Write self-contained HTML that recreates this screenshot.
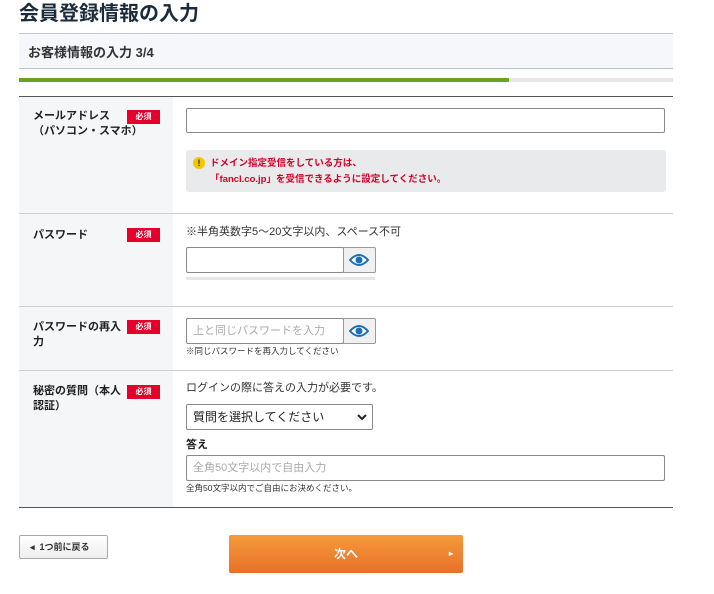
<!DOCTYPE html>
<html><head><meta charset="utf-8"><style>
*{box-sizing:border-box;margin:0;padding:0}
body{width:714px;height:594px;background:#fff;font-family:"Liberation Sans","Noto Sans CJK JP",sans-serif;color:#222;position:relative;overflow:hidden}
.a{position:absolute}
.lbl{position:absolute;left:33px;font-size:11px;font-weight:bold;line-height:15px;color:#222}
.badge{position:absolute;left:127px;width:33px;height:14px;background:#e4002b;color:#fff;font-size:8px;text-align:center;line-height:14px;font-weight:bold}
.inp{position:absolute;border:1px solid #8a8a8a;border-radius:2px;background:#fff;font-size:11px;color:#aaa;padding-left:6px}
.eye{position:absolute;width:33px;height:26px;border:1px solid #999;background:#f0f0f0;border-radius:0 2px 2px 0}
.hr{position:absolute;left:19px;width:654px;height:1px;background:#d0d0d0}
</style></head><body>
<div class="a" style="left:19px;top:1px;font-size:20px;font-weight:bold;color:#1c2b3b;line-height:26px">会員登録情報の入力</div>
<div class="a" style="left:19px;top:33px;width:654px;height:36px;background:#f5f7fa;border-top:1px solid #bac6d3;border-bottom:1px solid #bac6d3"></div>
<div class="a" style="left:28px;top:42px;font-size:13px;font-weight:bold;color:#333">お客様情報の入力 3/4</div>
<div class="a" style="left:19px;top:78px;width:654px;height:4px;background:#e6e6e6"></div>
<div class="a" style="left:19px;top:78px;width:490px;height:4px;background:#6aa321"></div>
<div class="a" style="left:19px;top:96px;width:654px;height:1px;background:#555"></div>
<div class="a" style="left:19px;top:97px;width:154px;height:410px;background:#f5f6f8"></div>
<div class="hr" style="top:213px"></div>
<div class="hr" style="top:306px"></div>
<div class="hr" style="top:370px"></div>
<div class="a" style="left:19px;top:507px;width:654px;height:1px;background:#555"></div>

<div class="lbl" style="top:109px">メールアドレス<br>（パソコン・スマホ）</div><div class="badge" style="top:110px">必須</div>
<div class="inp" style="left:186px;top:108px;width:479px;height:25px"></div>
<div class="a" style="left:186px;top:150px;width:480px;height:42px;background:#e9eaeb;border-radius:3px"></div>
<div class="a" style="left:193px;top:157px;width:12px;height:12px;border-radius:50%;background:#f5c400;font-size:9px;font-weight:bold;text-align:center;line-height:12px;color:#333">!</div>
<div class="a" style="left:210px;top:156px;font-size:9.5px;font-weight:bold;color:#d4002a;line-height:16px">ドメイン指定受信をしている方は、<br>「fancl.co.jp」を受信できるように設定してください。</div>

<div class="lbl" style="top:228px">パスワード</div><div class="badge" style="top:228px">必須</div>
<div class="a" style="left:186px;top:223px;font-size:11px;color:#333">※半角英数字5～20文字以内、スペース不可</div>
<div class="inp" style="left:186px;top:247px;width:158px;height:26px"></div>
<div class="eye" style="left:343px;top:247px"></div>
<svg class="a" style="left:349px;top:253px" width="20" height="14" viewBox="0 0 20 14"><path d="M1 7Q10 -3 19 7Q10 17 1 7Z" fill="#fff" stroke="#1a6fb8" stroke-width="2"/><circle cx="10" cy="7" r="3.5" fill="#1a6fb8"/></svg>
<div class="a" style="left:186px;top:277px;width:189px;height:3px;background:#e6e6e6"></div>

<div class="lbl" style="top:320px">パスワードの再入<br>力</div><div class="badge" style="top:320px">必須</div>
<div class="inp" style="left:186px;top:318px;width:158px;height:26px;line-height:24px">上と同じパスワードを入力</div>
<div class="eye" style="left:343px;top:318px"></div>
<svg class="a" style="left:349px;top:324px" width="20" height="14" viewBox="0 0 20 14"><path d="M1 7Q10 -3 19 7Q10 17 1 7Z" fill="#fff" stroke="#1a6fb8" stroke-width="2"/><circle cx="10" cy="7" r="3.5" fill="#1a6fb8"/></svg>
<div class="a" style="left:186px;top:345px;font-size:8.5px;color:#333">※同じパスワードを再入力してください</div>

<div class="lbl" style="top:384px">秘密の質問（本人<br>認証）</div><div class="badge" style="top:385px">必須</div>
<div class="a" style="left:186px;top:379px;font-size:11px;color:#333">ログインの際に答えの入力が必要です。</div>
<div class="inp" style="left:186px;top:404px;width:187px;height:26px;color:#222;font-size:12px;line-height:24px">質問を選択してください</div>
<svg class="a" style="left:357px;top:413px" width="10" height="8" viewBox="0 0 10 8"><path d="M1 2L5 6L9 2" fill="none" stroke="#222" stroke-width="2"/></svg>
<div class="a" style="left:186px;top:436px;font-size:11px;font-weight:bold">答え</div>
<div class="inp" style="left:186px;top:455px;width:479px;height:26px;line-height:24px">全角50文字以内で自由入力</div>
<div class="a" style="left:186px;top:482px;font-size:8.5px;color:#333">全角50文字以内でご自由にお決めください。</div>

<div class="a" style="left:19px;top:535px;width:89px;height:24px;border:1px solid #aaa;border-radius:2px;background:linear-gradient(#fff,#eee);font-size:9px;font-weight:bold;line-height:22px;padding-left:10px;color:#333">◂&nbsp; 1つ前に戻る</div>
<div class="a" style="left:229px;top:535px;width:234px;height:38px;border-radius:2px;background:linear-gradient(#f59a3a,#e8702a);color:#fff;font-size:12px;font-weight:bold;text-align:center;line-height:38px">次へ<span style="position:absolute;right:10px;font-size:8px">▸</span></div>
</body></html>
